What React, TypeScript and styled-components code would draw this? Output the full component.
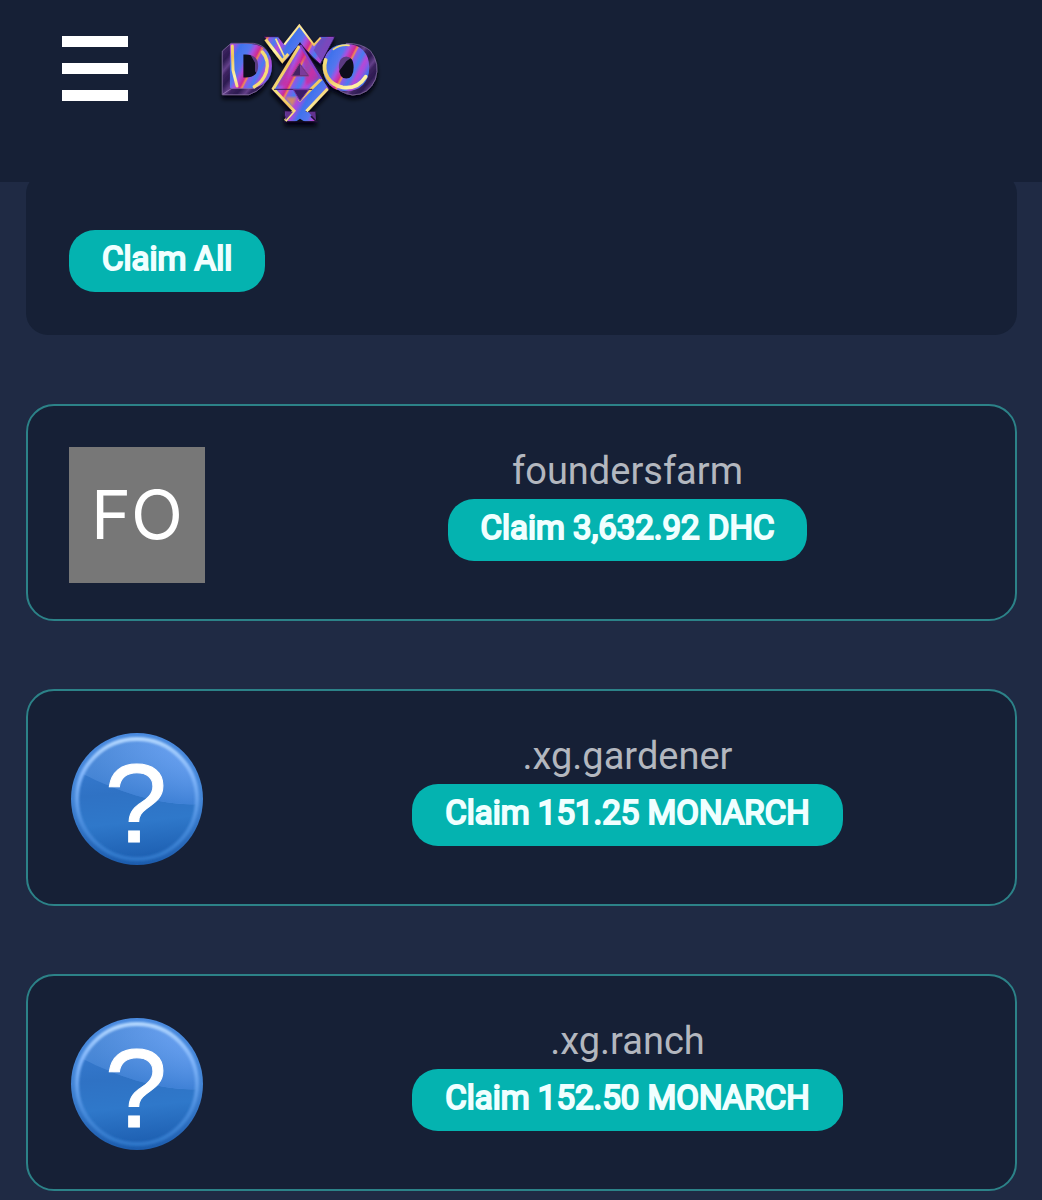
import React from "react";
import styled, { createGlobalStyle } from "styled-components";

const color = {
  page: "#1f2a44",
  surface: "#162036",
  outline: "#2c8288",
  accent: "#04b3b0",
  muted: "#b3b7bf",
};

const GlobalStyle = createGlobalStyle`
  *, *::before, *::after { box-sizing: border-box; }
  body {
    margin: 0;
    background: ${color.page};
    font-family: Roboto, "Liberation Sans", sans-serif;
  }
`;

const Header = styled.header`
  position: sticky;
  top: 0;
  z-index: 1;
  display: flex;
  align-items: flex-start;
  gap: 77px;
  height: 182px;
  padding: 10px 62px;
  background: ${color.surface};
`;

const MenuButton = styled.button`
  display: flex;
  flex-direction: column;
  gap: 16px;
  width: 66px;
  margin-top: 26px;
  padding: 0;
  border: 0;
  background: none;
  cursor: pointer;
`;

const MenuBar = styled.span`
  width: 100%;
  height: 11px;
  background: #fff;
`;

const HomeLink = styled.a`
  display: block;
  line-height: 0;
`;

const Main = styled.main`
  display: flex;
  flex-direction: column;
  gap: 69px;
  margin-top: -10px;
  padding: 0 25px 10px 26px;
`;

const Panel = styled.section`
  padding: 58px 43px 43px;
  border-radius: 22px;
  background: ${color.surface};
`;

const ClaimButton = styled.button`
  height: 62px;
  padding: 0 33px 4px;
  border: 0;
  border-radius: 26px;
  background: ${color.accent};
  color: #f0ffff;
  font: 400 33px/40px Roboto, "Liberation Sans", sans-serif;
  -webkit-text-stroke: 2px #f0ffff;
  white-space: nowrap;
  cursor: pointer;
`;

const FarmList = styled.ul`
  display: flex;
  flex-direction: column;
  gap: 68px;
  margin: 0;
  padding: 0;
  list-style: none;
`;

const FarmCard = styled.li`
  display: grid;
  grid-template-columns: 136px 1fr;
  gap: 76px;
  padding: 41px 41px 36px;
  border: 2px solid ${color.outline};
  border-radius: 28px;
  background: ${color.surface};
`;

const Initials = styled.div`
  display: grid;
  place-items: center;
  height: 136px;
  padding-bottom: 2px;
  background: #777;
  color: #fff;
  font-family: Inter, Roboto, sans-serif;
  font-size: 68px;
  line-height: 80px;
`;

const FarmInfo = styled.div`
  display: flex;
  flex-direction: column;
  align-items: center;
  gap: 4px;
`;

const FarmName = styled.span`
  color: ${color.muted};
  font-size: 38px;
  line-height: 48px;
`;

function QuestionIcon({ id }: { id: string }) {
  return (
    <svg width="136" height="136" viewBox="0 0 136 136" aria-hidden="true">
      <defs>
        <linearGradient id={`${id}-rim`} x1="0" y1="0" x2="0" y2="1">
          <stop offset="0" stopColor="#4a8be0" />
          <stop offset="0.5" stopColor="#4385d6" />
          <stop offset="1" stopColor="#1c5cad" />
        </linearGradient>
        <linearGradient id={`${id}-ring`} x1="0" y1="0" x2="0" y2="1">
          <stop offset="0" stopColor="#b4d8ff" />
          <stop offset="0.3" stopColor="#82b6fb" />
          <stop offset="0.7" stopColor="#4a8ddd" />
          <stop offset="1" stopColor="#2f77c9" />
        </linearGradient>
        <linearGradient id={`${id}-face`} x1="0.3" y1="0" x2="0.4" y2="1">
          <stop offset="0" stopColor="#3c7fd6" />
          <stop offset="0.45" stopColor="#2f72c4" />
          <stop offset="0.7" stopColor="#2f78ca" />
          <stop offset="1" stopColor="#1e60b2" />
        </linearGradient>
        <linearGradient id={`${id}-gloss`} x1="0.1" y1="0.4" x2="0.9" y2="0.4">
          <stop offset="0" stopColor="#3b7bcb" />
          <stop offset="1" stopColor="#659df0" />
        </linearGradient>
        <linearGradient id={`${id}-fade`} x1="0" y1="0" x2="0" y2="1">
          <stop offset="0" stopColor="#7db1f8" stopOpacity="0.3" />
          <stop offset="1" stopColor="#2f75cb" stopOpacity="0.7" />
        </linearGradient>
        <filter id={`${id}-soft`}>
          <feGaussianBlur stdDeviation="1" />
        </filter>
      </defs>
      <circle cx="68" cy="67" r="66" fill={`url(#${id}-rim)`} />
      <circle cx="68" cy="67" r="60" fill={`url(#${id}-face)`} />
      <path
        d="M14 42 A60 60 0 0 1 128 72 C92 74 50 60 14 42Z"
        fill={`url(#${id}-gloss)`}
      />
      <path
        d="M14 42 A60 60 0 0 1 128 72 C92 74 50 60 14 42Z"
        fill={`url(#${id}-fade)`}
      />
      <circle
        cx="68"
        cy="67"
        r="60"
        fill="none"
        stroke={`url(#${id}-ring)`}
        strokeWidth="4"
        filter={`url(#${id}-soft)`}
      />
      <text
        x="67"
        y="110"
        textAnchor="middle"
        fontFamily="Liberation Sans, sans-serif"
        fontSize="112"
        fill="#fff"
        stroke="#fff"
        strokeWidth="1"
      >
        ?
      </text>
    </svg>
  );
}

function Logo() {
  return (
    <svg width="190" height="130" viewBox="0 0 570 390" role="img" aria-label="DWO">
      <defs>
        <linearGradient id="foil" gradientUnits="userSpaceOnUse" x1="0" y1="0" x2="112" y2="58" spreadMethod="repeat">
          <stop offset="0" stopColor="#a04fdf" />
          <stop offset="0.14" stopColor="#3f72ec" />
          <stop offset="0.36" stopColor="#5576ee" />
          <stop offset="0.46" stopColor="#a94fe0" />
          <stop offset="0.58" stopColor="#d02a91" />
          <stop offset="0.63" stopColor="#f08a55" />
          <stop offset="0.67" stopColor="#8c58e8" />
          <stop offset="0.82" stopColor="#477cf0" />
          <stop offset="0.93" stopColor="#b549d6" />
          <stop offset="1" stopColor="#a04fdf" />
        </linearGradient>
        <linearGradient id="side" gradientUnits="userSpaceOnUse" x1="0" y1="0" x2="36" y2="30" spreadMethod="repeat">
          <stop offset="0" stopColor="#2c1a50" />
          <stop offset="0.4" stopColor="#64408a" />
          <stop offset="0.6" stopColor="#3d2460" />
          <stop offset="1" stopColor="#2c1a50" />
        </linearGradient>
        <linearGradient id="gold" gradientUnits="userSpaceOnUse" x1="0" y1="0" x2="60" y2="90" spreadMethod="reflect">
          <stop offset="0" stopColor="#fff5a8" />
          <stop offset="0.5" stopColor="#f1c55d" />
          <stop offset="1" stopColor="#f5e37f" />
        </linearGradient>
        <filter id="shadow" x="-20%" y="-20%" width="140%" height="150%">
          <feDropShadow dx="0" dy="12" stdDeviation="7" floodColor="#03060e" floodOpacity="1" />
        </filter>
        <filter id="glow">
          <feGaussianBlur stdDeviation="3" />
        </filter>
        <filter id="sheen">
          <feGaussianBlur stdDeviation="1.5" />
        </filter>
      </defs>
      <g filter="url(#shadow)">
        <path
          d="M52 123 78 100H145Q205 108 192 185Q184 236 132 254H52Z"
          fill="url(#side)"
          stroke="#8d74ab"
          strokeWidth="2"
        />
        <path d="M54 252 80 235H150" fill="none" stroke="#a78cc4" strokeWidth="2" />
        <path
          d="M424 100Q470 100 496 122Q526 160 511 208Q492 254 443 255Q405 250 382 222Z"
          fill="url(#side)"
          stroke="#8d74ab"
          strokeWidth="2"
        />
        <rect x="104" y="124" width="62" height="86" fill="#0d0b1c" />
        <path d="M130 124 166 150V206L150 184V158Z" fill="#5c3b82" />
        <circle cx="424" cy="168" r="40" fill="#0d0b1c" />
        <path d="M388 164Q404 128 446 138L424 154 402 184Z" fill="#5c3b82" />
        <g fill="url(#foil)" stroke="url(#foil)" strokeLinejoin="round">
          <text x="63" y="231" fontFamily="DejaVu Sans, sans-serif" fontWeight="700" fontSize="172" strokeWidth="8">
            D
          </text>
          <text x="424" y="230" textAnchor="middle" fontFamily="DejaVu Sans, sans-serif" fontWeight="700" fontSize="164" strokeWidth="15">
            O
          </text>
        </g>
        <g fill="none" stroke="url(#gold)" strokeLinecap="round" filter="url(#sheen)">
          <path d="M82 108 84 180 96 228" strokeWidth="9" />
          <path d="M172 126Q194 150 184 186Q174 216 148 230" strokeWidth="10" stroke="#f6dd75" />
          <path d="M362 150C350 190 374 224 413 232Q458 238 482 200" strokeWidth="11" />
          <path d="M385 118Q405 103 432 106" strokeWidth="5" />
        </g>
        <path
          d="M178 80H220L237 102 283 42 328 103 345 80H389L346 163 323 142 285 100 248 145 232 158Z"
          fill="url(#foil)"
          stroke="#2a174a"
          strokeWidth="3"
        />
        <path d="M346 83 326 121 349 153 387 84Z" fill="#7146b6" opacity="0.85" />
        <g fill="none" stroke="url(#gold)" filter="url(#sheen)">
          <path d="M182 88 232 153 250 132" strokeWidth="9" />
          <path d="M212 86 238 140" strokeWidth="5" />
          <path d="M238 104 283 46 327 105 347 83" strokeWidth="6" />
        </g>
        <path
          d="M285 100 199 236 263 304 238 304V318L252 323 240 335H335L319 320 334 305 306 304 373 236Z"
          fill="url(#foil)"
          stroke="#201238"
          strokeWidth="4"
        />
        <path d="M265 140 242 227H215ZM290 110 347 205 303 226Z" fill="#d0248a" opacity="0.6" filter="url(#glow)" />
        <path d="M240 262H275L262 290Z" fill="#f08b4a" opacity="0.8" filter="url(#glow)" />
        <g fill="none" stroke="url(#gold)" filter="url(#sheen)">
          <path d="M283 108 205 236 267 302 241 332" strokeWidth="9" />
          <path d="M349 207 282 273M368 236 304 304" strokeWidth="9" />
        </g>
        <path d="M286 105 348 207" fill="none" stroke="#8140cb" strokeWidth="7" />
        <path d="M207 238H322" stroke="#361c58" strokeWidth="3" />
        <path d="M284 160 260 198H312Z" fill="#442064" stroke="#8c407f" strokeWidth="3" />
        <path d="M285 164V196H309Z" fill="#7b3a9b" />
        <path d="M265 239H311L285 273Z" fill="#3a1c68" stroke="#7637ac" strokeWidth="3" />
        <path d="M240 304 264 305 242 331ZM331 305 310 306 333 331Z" fill="#63328e" />
        <path d="M272 335 285 326 299 335Z" fill="#090b17" />
      </g>
    </svg>
  );
}

const farms = [
  { name: "foundersfarm", claim: "Claim 3,632.92 DHC", initials: "FO" },
  { name: ".xg.gardener", claim: "Claim 151.25 MONARCH" },
  { name: ".xg.ranch", claim: "Claim 152.50 MONARCH" },
];

export default function App() {
  return (
    <>
      <GlobalStyle />
      <Header>
        <MenuButton type="button" aria-label="Menu">
          <MenuBar />
          <MenuBar />
          <MenuBar />
        </MenuButton>
        <HomeLink href="#">
          <Logo />
        </HomeLink>
      </Header>
      <Main>
        <Panel>
          <ClaimButton type="button">Claim All</ClaimButton>
        </Panel>
        <FarmList>
          {farms.map((farm, index) => (
            <FarmCard key={farm.name}>
              {farm.initials ? (
                <Initials>{farm.initials}</Initials>
              ) : (
                <QuestionIcon id={`farm-${index}`} />
              )}
              <FarmInfo>
                <FarmName>{farm.name}</FarmName>
                <ClaimButton type="button">{farm.claim}</ClaimButton>
              </FarmInfo>
            </FarmCard>
          ))}
        </FarmList>
      </Main>
    </>
  );
}
